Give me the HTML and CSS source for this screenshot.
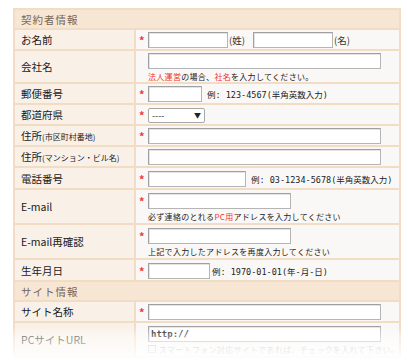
FILE: index.html
```html
<!DOCTYPE html>
<html lang="ja">
<head>
<meta charset="utf-8">
<link rel="stylesheet" href="styles.css">
</head>
<body>
<div class="wrap">
<table class="form">
  <tr class="sec"><th colspan="2">契約者情報</th></tr>
  <tr class="r20">
    <td class="lbl">お名前</td>
    <td class="val"><span class="req">*</span><input class="in w80" type="text"><span class="suf">(姓)</span><input class="in w80" type="text"><span class="suf">(名)</span></td>
  </tr>
  <tr class="r32">
    <td class="lbl">会社名</td>
    <td class="val"><span class="req blank"></span><input class="in wl" type="text"><div class="note"><span class="red">法人運営</span>の場合、<span class="red">社名</span>を入力してください。</div></td>
  </tr>
  <tr class="r20">
    <td class="lbl">郵便番号</td>
    <td class="val"><span class="req">*</span><input class="in w54" type="text"><span class="ex">例: 123-4567(半角英数入力)</span></td>
  </tr>
  <tr class="r20">
    <td class="lbl">都道府県</td>
    <td class="val"><span class="req">*</span><span class="sel">----<span class="arr">▼</span></span></td>
  </tr>
  <tr class="r20">
    <td class="lbl">住所<small>(市区町村番地)</small></td>
    <td class="val"><span class="req">*</span><input class="in wl" type="text"></td>
  </tr>
  <tr class="r20">
    <td class="lbl">住所<small>(マンション・ビル名)</small></td>
    <td class="val"><span class="req blank"></span><input class="in wl" type="text"></td>
  </tr>
  <tr class="r21">
    <td class="lbl">電話番号</td>
    <td class="val"><span class="req">*</span><input class="in w98" type="text"><span class="ex">例: 03-1234-5678(半角英数入力)</span></td>
  </tr>
  <tr class="r34">
    <td class="lbl">E-mail</td>
    <td class="val"><span class="req">*</span><input class="in w143" type="text"><div class="note">必ず連絡のとれる<span class="red">PC用</span>アドレスを入力してください</div></td>
  </tr>
  <tr class="r34">
    <td class="lbl">E-mail再確認</td>
    <td class="val"><span class="req">*</span><input class="in w143" type="text"><div class="note">上記で入力したアドレスを再度入力してください</div></td>
  </tr>
  <tr class="r21">
    <td class="lbl">生年月日</td>
    <td class="val"><span class="req">*</span><input class="in w62" type="text"><span class="ex ex2">例: 1970-01-01(年-月-日)</span></td>
  </tr>
  <tr class="sec"><th colspan="2">サイト情報</th></tr>
  <tr class="r20">
    <td class="lbl">サイト名称</td>
    <td class="val"><span class="req">*</span><input class="in wl" type="text"></td>
  </tr>
  <tr class="r34">
    <td class="lbl">PCサイトURL</td>
    <td class="val"><span class="req blank"></span><input class="in wl url" type="text" value="http://"><div class="note chk"><span class="box"></span>スマートフォン対応サイトであれば、チェックを入れて下さい。</div></td>
  </tr>
</table>
<div class="fade"></div>
</div>
</body>
</html>
```

FILE: styles.css
```css
* { box-sizing: border-box; }
html, body { margin: 0; padding: 0; background: #fff; }
body {
  font-family: "Noto Sans CJK JP", "DejaVu Sans", sans-serif;
  color: #333;
  width: 408px;
  height: 360px;
  overflow: hidden;
}
.wrap { position: relative; padding: 8px 0 0 13px; }
.form {
  width: 383px;
  border-collapse: collapse;
  border: 2px solid #f3dcc4;
  font-size: 10px;
}
.form td, .form th { border: 2px solid #f3dcc4; padding: 0; vertical-align: middle; }
.sec th {
  background: #f7e6d4;
  color: #776655;
  font-weight: normal;
  text-align: left;
  height: 20px;
  padding-left: 6px;
  font-size: 10.5px;
  letter-spacing: 1px;
}
.lbl {
  width: 121px;
  min-width: 121px;
  max-width: 121px;
  background: #f9f1e8;
  padding-left: 6px !important;
  color: #1a1a1a;
  font-size: 10.5px;
}
.lbl small { font-size: 8px; }
.val { background: #faf8f6; padding-left: 3px !important; white-space: nowrap; }
.r20 td { height: 21px; }
.r21 td { height: 22px; }
.r32 td { height: 33px; }
.r34 td { height: 35px; }
.req {
  display: inline-block;
  width: 8px;
  color: #f03a3a;
  font-size: 11px;
  font-weight: bold;
  vertical-align: middle;
  margin-right: 1px;
}
.in {
  height: 16px;
  border: 1px solid #b5b5b5;
  border-top-color: #a0a0a0;
  border-left-color: #a0a0a0;
  box-shadow: inset 1px 1px 0 #e4e4e4;
  background: #fff;
  padding: 0 2px;
  font-family: "DejaVu Sans Mono", monospace;
  font-size: 9px;
  color: #111;
  vertical-align: middle;
  margin: 0;
}
.url { font-weight: bold; }
.w80 { width: 80px; }
.w54 { width: 54px; }
.w62 { width: 62px; }
.w98 { width: 98px; }
.w143 { width: 143px; }
.wl { width: 233px; }
.suf { display: inline-block; font-size: 9.5px; vertical-align: middle; width: 25px; padding-left: 1px; }
.ex {
  font-family: "DejaVu Sans Mono", "Noto Sans CJK JP", monospace;
  font-size: 8.5px;
  vertical-align: middle;
  margin-left: 5px;
  color: #222;
}
.ex2 { margin-left: 2px; }
.note { font-size: 8px; margin: 2px 0 0 9px; color: #222; letter-spacing: 0.3px; }
.red { color: #ee3333; }
.sel {
  display: inline-flex;
  justify-content: space-between;
  align-items: center;
  width: 57px;
  height: 15px;
  border: 1px solid #a8a8a8;
  border-radius: 2px;
  background: #fff;
  font-size: 9px;
  padding: 0 3px;
  vertical-align: middle;
}
.arr { font-size: 7px; color: #222; }
.chk { color: #aaa; display: flex; align-items: center; gap: 3px; }
.box { width: 8px; height: 8px; border: 1px solid #bbb; display: inline-block; }
.fade {
  position: absolute;
  left: 0;
  right: 0;
  top: 326px;
  height: 34px;
  background: linear-gradient(to bottom, rgba(255,255,255,0) 0%, rgba(255,255,255,0.5) 35%, rgba(255,255,255,0.7) 65%, #fff 100%);
}
```
